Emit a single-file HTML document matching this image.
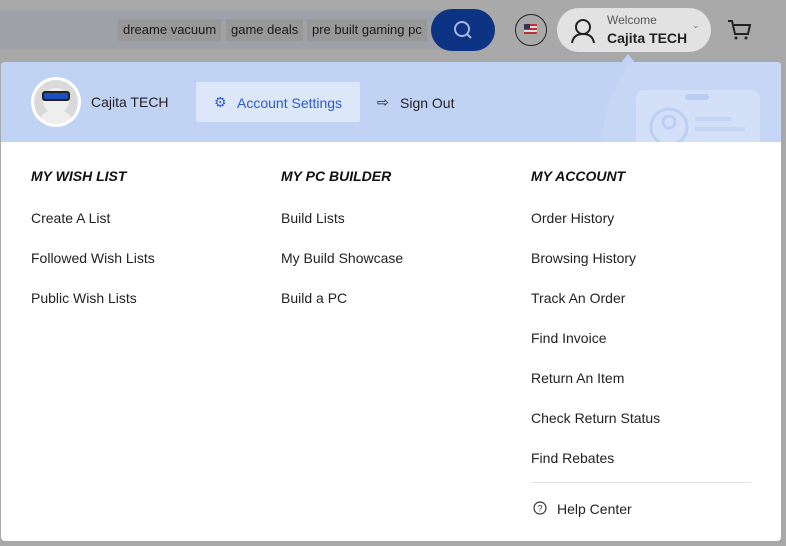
<!DOCTYPE html>
<html><head><style>
*{margin:0;padding:0;box-sizing:border-box}
body{width:786px;height:546px;overflow:hidden;background:#a8a8a8;font-family:"Liberation Sans",sans-serif;position:relative;color:#222}
.topbar{position:absolute;left:0;top:0;width:786px;height:52px;background:#a9a9a9}
.search{position:absolute;left:0;top:10px;width:490px;height:40px;background:#9ea1a8;border-radius:0 20px 20px 0}
.tag{position:absolute;top:19px;height:22px;background:#989898;color:#1a1a1a;font-size:13px;line-height:22px;padding:0 5px;border-radius:2px}
.sbtn{position:absolute;left:431px;top:9px;width:64px;height:42px;border-radius:21px;background:#0d3385}
.flag{position:absolute;left:515px;top:14px;width:32px;height:32px;border-radius:50%;border:1.5px solid #222;background:#a9a9a9}
.welcome{position:absolute;left:557px;top:8px;width:154px;height:44px;border-radius:22px;background:#e2e2e2}
.panel{position:absolute;left:1px;top:62px;width:780px;height:479px;background:#fff;border-radius:4px;overflow:hidden}
.band{position:absolute;left:0;top:0;width:780px;height:80px;background:#c1d3f5;overflow:hidden}
.h{position:absolute;font-weight:bold;font-style:italic;font-size:14px;color:#111}
.l{position:absolute;font-size:14px;color:#222}
</style></head><body>
<div class="topbar"></div>
<div class="search"></div>
<div class="tag" style="left:118px">dreame vacuum</div>
<div class="tag" style="left:226px">game deals</div>
<div class="tag" style="left:307px">pre built gaming pc</div>
<div class="sbtn"><svg width="64" height="42"><circle cx="31" cy="20" r="7" fill="none" stroke="#a8b6d8" stroke-width="2"/><path d="M36 25l4 4" stroke="#a8b6d8" stroke-width="2"/></svg></div>
<div class="flag"><svg width="29" height="29"><rect x="8" y="9" width="13" height="10" fill="#b33"/><rect x="8" y="11" width="13" height="2" fill="#ddd"/><rect x="8" y="15" width="13" height="2" fill="#ddd"/><rect x="8" y="9" width="6" height="5" fill="#335"/></svg></div>
<div class="welcome">
<svg style="position:absolute;left:12px;top:9px" width="28" height="28"><circle cx="14" cy="10" r="7" fill="none" stroke="#222" stroke-width="2"/><path d="M3 26c1-6 5-9 11-9s10 3 11 9" fill="none" stroke="#222" stroke-width="2"/></svg>
<div style="position:absolute;left:50px;top:5px;font-size:12px;color:#555">Welcome</div>
<div style="position:absolute;left:50px;top:22px;font-size:14px;font-weight:bold;color:#222">Cajita TECH</div>
<div style="position:absolute;left:135px;top:12px;font-size:9px;color:#777">⌄</div>
</div>
<svg style="position:absolute;left:726px;top:18px" width="26" height="24"><path d="M2 3h4l3 13h13l2-9H8" fill="none" stroke="#222" stroke-width="2"/><circle cx="10" cy="20" r="1.5" fill="#222"/><circle cx="20" cy="20" r="1.5" fill="#222"/></svg>
<svg style="position:absolute;left:618px;top:52px" width="20" height="12"><path d="M2 12L10 2L18 12Z" fill="#c1d3f5"/></svg>
<div class="panel">
<div class="band">
<div style="position:absolute;left:600px;top:-60px;width:300px;height:300px;border-radius:50%;background:#c6d7f5"></div>
<div style="position:absolute;left:635px;top:28px;width:124px;height:70px;border-radius:8px;background:#d3e0f8"></div>
<div style="position:absolute;left:684px;top:32px;width:24px;height:6px;border-radius:3px;background:#b9cdf2"></div>
<svg style="position:absolute;left:646px;top:45px" width="100" height="40"><circle cx="22" cy="20" r="18" fill="none" stroke="#bcd0f3" stroke-width="3"/><circle cx="22" cy="15" r="6" fill="none" stroke="#bcd0f3" stroke-width="3"/><rect x="48" y="10" width="36" height="4" fill="#c5d6f5"/><rect x="48" y="20" width="50" height="4" fill="#c5d6f5"/></svg>
<div style="position:absolute;left:30px;top:15px;width:50px;height:50px;border-radius:50%;background:#fff"></div>
<div style="position:absolute;left:33px;top:18px;width:44px;height:44px;border-radius:50%;background:#d9d9d9;overflow:hidden">
<div style="position:absolute;left:9px;top:8px;width:26px;height:26px;border-radius:50%;background:#eee"></div>
<div style="position:absolute;left:6px;top:30px;width:32px;height:20px;border-radius:50%;background:#eee"></div>
<div style="position:absolute;left:8px;top:11px;width:28px;height:10px;border-radius:3px;background:#1c4fbf;border:2px solid #222"></div>
</div>
<div style="position:absolute;left:90px;top:32px;font-size:14px">Cajita TECH</div>
<div style="position:absolute;left:195px;top:20px;width:164px;height:40px;background:#dde7fa;border-radius:2px"></div>
<div style="position:absolute;left:213px;top:32px;font-size:14px;color:#2a5bd7">⚙</div>
<div style="position:absolute;left:236px;top:33px;font-size:14px;color:#2a5bd7">Account Settings</div>
<div style="position:absolute;left:376px;top:32px;font-size:14px">⇨</div>
<div style="position:absolute;left:399px;top:33px;font-size:14px">Sign Out</div>
</div>
<div class="h" style="left:30px;top:106px">MY WISH LIST</div>
<div class="h" style="left:280px;top:106px">MY PC BUILDER</div>
<div class="h" style="left:530px;top:106px">MY ACCOUNT</div>
<div class="l" style="left:30px;top:148px">Create A List</div>
<div class="l" style="left:30px;top:188px">Followed Wish Lists</div>
<div class="l" style="left:30px;top:228px">Public Wish Lists</div>
<div class="l" style="left:280px;top:148px">Build Lists</div>
<div class="l" style="left:280px;top:188px">My Build Showcase</div>
<div class="l" style="left:280px;top:228px">Build a PC</div>
<div class="l" style="left:530px;top:148px">Order History</div>
<div class="l" style="left:530px;top:188px">Browsing History</div>
<div class="l" style="left:530px;top:228px">Track An Order</div>
<div class="l" style="left:530px;top:268px">Find Invoice</div>
<div class="l" style="left:530px;top:308px">Return An Item</div>
<div class="l" style="left:530px;top:348px">Check Return Status</div>
<div class="l" style="left:530px;top:388px">Find Rebates</div>
<div style="position:absolute;left:530px;top:420px;width:220px;height:1px;background:#e2e2e2"></div>
<svg style="position:absolute;left:532px;top:439px" width="14" height="14"><circle cx="7" cy="7" r="6" fill="none" stroke="#333" stroke-width="1.2"/><text x="7" y="10.5" font-size="9" text-anchor="middle" fill="#333" font-family="Liberation Sans">?</text></svg>
<div class="l" style="left:556px;top:439px">Help Center</div>
</div>
</body></html>
